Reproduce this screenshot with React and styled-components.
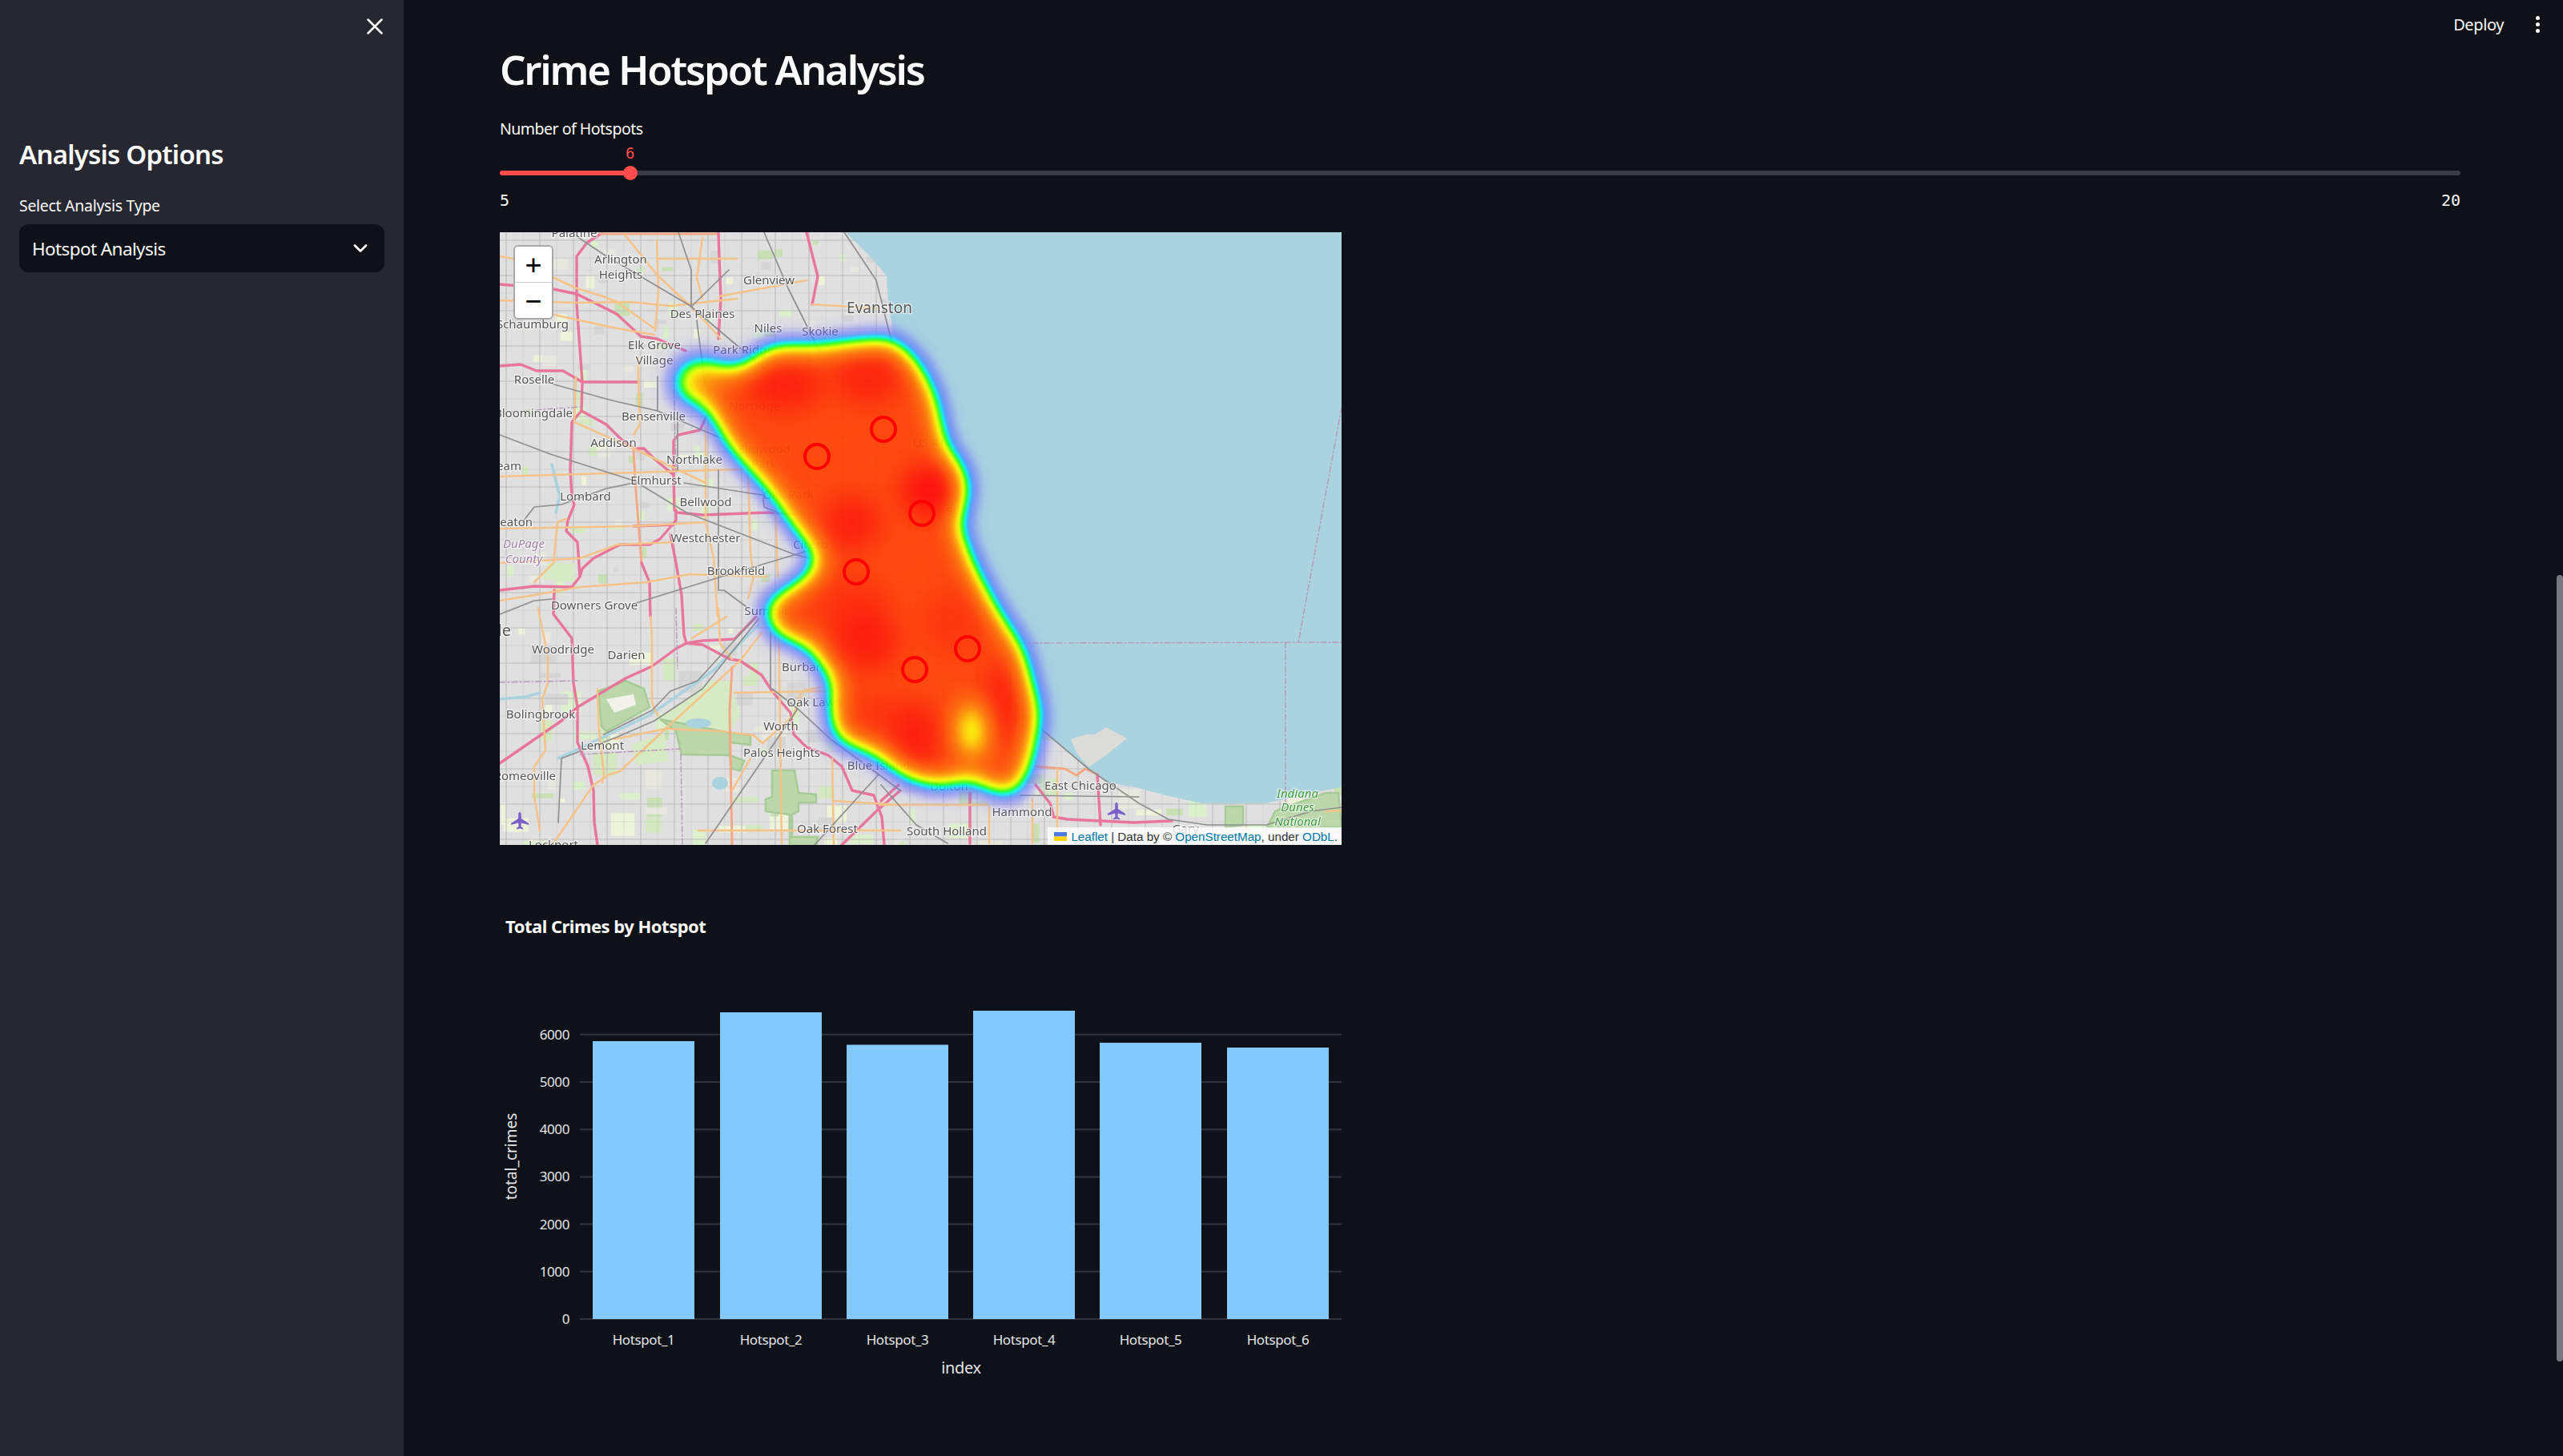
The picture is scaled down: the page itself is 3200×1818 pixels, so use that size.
import React from 'react';
import styled, { createGlobalStyle } from 'styled-components';
import { X, ChevronDown } from 'lucide-react';

const UI_FONT = '"Noto Sans", "Open Sans", sans-serif';
const MONO_FONT = '"DejaVu Sans Mono", "Liberation Mono", monospace';

const GlobalStyle = createGlobalStyle`
    html, body {
        margin: 0;
        padding: 0;
        background: #0e1117;
    }
    #root {
        width: 100%;
    }
`;

const Page = styled.div`
    display: flex;
    height: 1818px;
    overflow: hidden;
    color: #fafafa;
    font-family: ${UI_FONT};
`;

const Sidebar = styled.aside`
    display: flex;
    flex-direction: column;
    flex: 0 0 504px;
    box-sizing: border-box;
    padding: 16px 24px 0;
    background: #262730;
`;

const CloseRow = styled.div`
    display: flex;
    justify-content: flex-end;
    height: 34px;
    margin-right: -5px;
`;

const SidebarTitle = styled.h2`
    margin: 120px 0 0;
    font-size: 33px;
    line-height: 46px;
    font-weight: 600;
    letter-spacing: -0.8px;
`;

const FieldLabel = styled.label`
    display: block;
    font-size: 19.5px;
    line-height: 28px;
    letter-spacing: -0.5px;
    color: #fafafa;
`;

const SidebarLabel = styled(FieldLabel)`
    margin-top: 27px;
    letter-spacing: -0.3px;
`;

const SelectBox = styled.div`
    display: flex;
    align-items: center;
    justify-content: space-between;
    box-sizing: border-box;
    height: 60px;
    margin-top: 9px;
    padding: 0 16px 0 16px;
    border-radius: 12px;
    background: #0e1117;
    font-size: 22.5px;
    letter-spacing: -0.6px;
`;

const Main = styled.main`
    position: relative;
    flex: 1;
    min-width: 0;
    background: #0e1117;
`;

const TopBar = styled.header`
    display: flex;
    justify-content: flex-end;
    align-items: center;
    gap: 40px;
    height: 60px;
    padding-right: 29px;
    font-size: 20px;
    letter-spacing: -0.4px;
`;

const MenuDots = styled.span`
    display: flex;
    flex-direction: column;
    gap: 3px;
    i {
        display: block;
        width: 5px;
        height: 5px;
        border-radius: 50%;
        background: #fafafa;
    }
`;

const Content = styled.div`
    padding: 0 128px 0 120px;
`;

const Title = styled.h1`
    margin: -2px 0 0;
    font-size: 51px;
    line-height: 56px;
    font-weight: 600;
    letter-spacing: -2.2px;
`;

const SliderLabel = styled(FieldLabel)`
    margin-top: 33px;
`;

const SliderValue = styled.div`
    height: 26px;
    margin-top: 3px;
    padding-left: 157px;
    font-family: ${MONO_FONT};
    font-size: 19px;
    line-height: 26px;
    color: #ff4b4b;
`;

const SliderTrack = styled.div`
    position: relative;
    height: 6px;
    margin-top: 9px;
    border-radius: 3px;
    background: #3a3d45;
`;

const SliderFill = styled.div`
    height: 100%;
    border-radius: 3px;
    background: #ff4b4b;
`;

const SliderThumb = styled.span`
    position: absolute;
    top: -6px;
    width: 18px;
    height: 18px;
    margin-left: -9px;
    border-radius: 50%;
    background: #ff4b4b;
`;

const SliderRange = styled.div`
    display: flex;
    justify-content: space-between;
    margin-top: 18px;
    font-family: ${MONO_FONT};
    font-size: 20px;
    line-height: 26px;
    color: #fafafa;
`;

const MapFrame = styled.div`
    position: relative;
    width: 1051px;
    height: 765px;
    margin-top: 27px;
    overflow: hidden;
    background: #e0e0e0;
    svg {
        display: block;
    }
`;

const ZoomControl = styled.div`
    position: absolute;
    top: 16px;
    left: 17px;
    display: flex;
    flex-direction: column;
    width: 46px;
    border: 2px solid #a8a8a8;
    border-radius: 6px;
    overflow: hidden;
`;

const ZoomButton = styled.span`
    display: flex;
    align-items: center;
    justify-content: center;
    height: 44px;
    background: #fff;
    color: #000;
    font-family: "DejaVu Sans Mono", monospace;
    font-size: 34px;
    line-height: 1;
    & + & {
        border-top: 1px solid #ccc;
    }
`;

const Attribution = styled.div`
    position: absolute;
    right: 0;
    bottom: 0;
    display: flex;
    align-items: center;
    height: 22px;
    padding: 0 5px 0 8px;
    background: rgba(255, 255, 255, 0.8);
    color: #333;
    font-family: "Liberation Sans", sans-serif;
    font-size: 15.2px;
    white-space: pre;
    a {
        color: #0078a8;
        text-decoration: none;
    }
`;

const Flag = styled.svg`
    margin-right: 5px;
`;

const ChartTitle = styled.div`
    margin-top: 87px;
    padding-left: 7px;
    font-size: 22px;
    line-height: 28px;
    font-weight: 700;
    letter-spacing: -0.5px;
`;

const Chart = styled.svg`
    display: block;
    margin-top: 21px;
`;

const Scrollbar = styled.div`
    position: absolute;
    top: 718px;
    right: 0;
    width: 8px;
    height: 982px;
    border-radius: 4px;
    background: #77787d;
`;

// map drawing
const ROAD_COLORS = {
    motorway: '#e9769a',
    primary: '#f5c388',
    salmon: '#f4a885',
    rail: '#8f8f8f',
    canal: '#aad3df',
    border: '#b49ab8',
};
const ROAD_WIDTHS = { motorway: 3.4, primary: 2.5, salmon: 3, rail: 1.7, canal: 3.5, border: 1.4 };

const Road = styled.polyline`
    fill: none;
    stroke: ${props => ROAD_COLORS[props.$kind]};
    stroke-width: ${props => ROAD_WIDTHS[props.$kind]};
    stroke-linejoin: round;
    stroke-linecap: round;
    stroke-dasharray: ${props => (props.$kind === 'border' ? '7 3 2 3' : 'none')};
`;

const Park = styled.polygon`
    fill: ${props => (props.$light ? '#d6ebc4' : '#bcd8aa')};
    stroke: ${props => (props.$light ? 'none' : '#a6cb96')};
    stroke-width: 2.5;
`;

const Place = styled.text`
    font-family: ${UI_FONT};
    font-size: ${props => props.$size || 15}px;
    font-style: ${props => (props.$tone ? 'italic' : 'normal')};
    fill: ${props => props.$tone || '#565656'};
    stroke: rgba(255, 255, 255, 0.65);
    stroke-width: 2.5px;
    paint-order: stroke;
    text-anchor: ${props => props.$anchor || 'middle'};
`;

const ROADS = [
    ['motorway', '103,187 102,223 90,237 88,297 90,330 93,340 85,360 83,373 97,387 100,430 90,443 43,442 0,447'],
    ['motorway', '103,187 96,90 96,30 109,13 126,2'],
    ['salmon', '126,2 272,2'],
    ['motorway', '273,0 274,33 276,83 273,133'],
    ['motorway', '383,0 397,55 390,90'],
    ['motorway', '0,65 62,70 96,77 146,102 176,130 196,133 232,148'],
    ['motorway', '0,167 26,165 46,173 79,173 103,187 173,187'],
    ['motorway', '102,223 133,240 150,257 167,270 180,270 193,283 217,303 218,347 222,350 253,353 333,350 370,352'],
    ['motorway', '217,303 217,260 223,253 250,247 258,230'],
    ['motorway', '220,347 220,360 200,383 187,390 150,390 117,407 103,420 100,430'],
    ['motorway', '167,367 217,365'],
    ['salmon', '167,273 170,323 177,413'],
    ['motorway', '177,413 187,437 188,480'],
    ['motorway', '213,377 220,413 227,453 230,503 233,513'],
    ['motorway', '68,447 67,477 90,507 92,563 97,593'],
    ['motorway', '97,593 157,557 190,542 220,520 233,513 253,515 287,533 300,535 327,553 340,573 363,600 367,627 383,643 410,653 427,667 440,697 467,703 477,730 480,765'],
    ['motorway', '0,663 77,610 97,593'],
    ['motorway', '97,593 97,637 110,667 117,697 118,737 122,765'],
    ['motorway', '233,513 253,510 293,508 320,480'],
    ['motorway', '427,765 470,723 500,697'],
    ['salmon', '669,667 706,670 720,678 731,670 746,677'],
    ['motorway', '746,677 750,740'],
    ['motorway', '691,730 709,733 791,737 839,735'],
    ['motorway', '669,690 687,713 691,727'],
    ['motorway', '587,700 587,763'],
    ['motorway', '476,710 498,690'],
    ['primary', '0,305 167,300 333,295'],
    ['primary', '0,370 167,367 257,362'],
    ['primary', '0,413 100,407 147,390 217,387'],
    ['primary', '43,437 67,413 72,362 83,358'],
    ['primary', '93,237 167,270 257,313'],
    ['primary', '95,180 93,237'],
    ['primary', '257,243 257,362 267,407 272,480'],
    ['primary', '0,460 43,453 100,443 183,437 237,427 333,430'],
    ['primary', '173,180 175,240 167,253'],
    ['primary', '310,297 313,400 317,430 310,457'],
    ['primary', '343,297 347,430'],
    ['primary', '48,470 60,530 60,563 53,583 57,647 43,667 43,703 50,747'],
    ['primary', '188,480 190,503 190,587 197,603'],
    ['primary', '122,570 123,613 130,677 128,687'],
    ['primary', '67,763 117,690 137,677 150,673 207,620 300,535 327,500'],
    ['primary', '207,620 277,623 317,628 328,638 367,603 377,573 400,568'],
    ['primary', '207,620 143,633'],
    ['salmon', '290,543 287,597 290,765'],
    ['primary', '293,575 410,573'],
    ['primary', '348,470 352,765'],
    ['primary', '248,747 500,747'],
    ['primary', '417,710 500,715'],
    ['primary', '415,657 417,765'],
    ['primary', '290,697 313,657'],
    ['primary', '240,507 283,480'],
    ['primary', '273,470 275,513 290,533'],
    ['primary', '0,30 16,33 96,70 129,80 146,87 193,120'],
    ['primary', '0,85 96,88 163,87 213,92 296,83'],
    ['primary', '63,102 146,120 193,128'],
    ['primary', '156,3 196,53 239,93 276,133'],
    ['primary', '196,33 296,33'],
    ['primary', '196,10 198,73 194,123'],
    ['primary', '253,7 246,57 253,83'],
    ['primary', '173,157 173,190'],
    ['primary', '274,80 383,60'],
    ['primary', '390,90 470,95'],
    ['primary', '476,715 609,715'],
    ['primary', '696,670 696,763'],
    ['primary', '611,717 611,763'],
    ['primary', '665,707 665,763'],
    ['primary', '1031,723 1051,722'],
    ['rail', '0,253 63,277 167,310 233,350 367,402 387,407'],
    ['rail', '57,187 140,210 197,223 283,260'],
    ['rail', '197,180 197,223'],
    ['rail', '246,110 256,190'],
    ['rail', '93,3 133,30 240,93'],
    ['rail', '223,0 239,47 239,93 286,47'],
    ['rail', '239,93 330,170'],
    ['rail', '30,360 43,343 77,340 133,320 167,313'],
    ['rail', '230,313 327,328'],
    ['rail', '222,237 222,297'],
    ['rail', '273,297 273,447 280,447 307,467'],
    ['rail', '283,270 327,313 330,343 347,350'],
    ['rail', '0,477 43,460 65,458'],
    ['rail', '170,463 277,430 387,397'],
    ['rail', '317,483 247,560 213,573 190,597 130,627'],
    ['rail', '323,483 253,570 193,610 147,630 77,657 73,737'],
    ['rail', '372,595 257,763'],
    ['rail', '340,570 372,595 413,633 473,677 500,697'],
    ['rail', '338,500 338,570'],
    ['rail', '473,677 393,765'],
    ['rail', '672,617 735,670 798,713 835,733 883,740 957,740 1013,723 1051,718'],
    ['rail', '650,703 798,705'],
    ['rail', '476,690 520,740 559,763'],
    ['rail', '430,0 470,60 490,140'],
    ['rail', '330,0 360,70 400,150'],
    ['border', '0,562 97,560'],
    ['border', '220,470 222,545'],
    ['border', '100,652 225,645'],
    ['border', '226,652 228,765'],
    ['border', '217,180 220,300'],
    ['border', '0,225 100,218'],
];

const LAKE_LINES = [
    ['border', '1051,219 997,512'],
    ['border', '650,513 1051,512'],
    ['border', '981,512 981,711'],
];

const PARKS = [
    ['200,607 263,560 287,560 300,603 287,623', true],
    ['60,413 93,413 93,437 53,433', true],
    ['165,640 205,625 210,660 170,665', true],
    ['123,573 157,560 180,570 187,593 133,623 127,617', false],
    ['200,608 287,625 313,628 313,640 287,637 287,653 305,660 300,672 290,670 287,653 227,652 220,623', false],
    ['340,672 368,672 373,700 395,702 395,712 373,712 373,723 365,727 365,755 397,755 395,766 362,766 362,727 332,723 332,708 340,705', false],
    ['906,717 928,717 928,740 906,743', false],
    ['968,723 1031,700 1047,700 1051,743 958,743', false],
];

const LAKE = '432,0 467,35 483,55 485,90 492,129 537,189 572,288 572,363 607,463 665,600 672,617 735,670 757,687 794,693 831,703 876,713 957,713 1013,700 1051,693 1051,0';
const HARBOR = '713,633 732,627 743,627 757,618 783,632 757,653 735,668 720,650';

const PLACES = [
    ['Palatine', 93, 6], ['Arlington', 151, 39], ['Heights', 151, 58], ['Glenview', 336, 65],
    ['Des Plaines', 253, 107], ['Evanston', 474, 101, 19], ['Niles', 335, 125], ['Skokie', 400, 129],
    ['Schaumburg', 41, 120], ['Elk Grove', 193, 146], ['Village', 193, 165], ['Park Ridge', 304, 152],
    ['Roselle', 43, 189], ['Bensenville', 192, 235], ['Bloomingdale', 42, 231], ['Addison', 142, 268],
    ['Northlake', 243, 289], ['Elmhurst', 195, 315], ['Lombard', 107, 335], ['Bellwood', 257, 342],
    ['Westchester', 257, 387], ['Brookfield', 295, 428], ['Downers Grove', 118, 471], ['Summit', 333, 478],
    ['Woodridge', 79, 526], ['Darien', 158, 533], ['Bolingbrook', 51, 607], ['Burbank', 382, 548],
    ['Oak Lawn', 393, 592], ['Worth', 351, 622], ['Lemont', 128, 646], ['Palos Heights', 352, 655],
    ['Blue Island', 473, 671], ['Oak Forest', 409, 750], ['South Holland', 558, 753], ['Hammond', 652, 729],
    ['East Chicago', 725, 696], ['Dolton', 561, 697], ['Gary', 856, 750], ['Lockport', 67, 770],
    ['Elmwood', 330, 276], ['Park', 330, 294], ['Oak Park', 360, 333], ['Cicero', 388, 395],
    ['Norridge', 318, 222], ['US 41', 536, 268], ['90', 566, 353],
];

const CUT_PLACES = [
    ['Stream', 27, 297, 15], ['Wheaton', 41, 367, 15], ['Naperville', 14, 504, 20], ['Romeoville', 70, 684, 15],
];

const TINTED_PLACES = [
    ['DuPage', 30, 394, '#a381a8'], ['County', 30, 413, '#a381a8'],
    ['Indiana', 996, 706, '#3f9d3f'], ['Dunes', 996, 723, '#3f9d3f'], ['National', 996, 741, '#3f9d3f'],
];

const HEAT_EDGE = '222,189 232,166 262,164 287,180 312,170 341,148 397,148 439,143 488,139 516,164 537,204 551,269 574,298 578,328 566,363 584,413 612,468 647,522 668,602 657,662 640,697 608,688 587,674 555,686 516,678 467,644 425,629 418,587 425,562 390,512 348,497 337,468 397,428 404,403 376,368 341,318 292,264 264,213 229,204';

// x, y, rx, ry, strength
const HEAT_PEAKS = [
    [355, 192, 48, 30, 0.7], [460, 182, 42, 32, 0.65], [537, 323, 36, 32, 1], [439, 363, 36, 34, 0.7],
    [440, 463, 48, 34, 0.4], [457, 510, 42, 38, 0.7], [520, 630, 30, 42, 0.75], [627, 587, 22, 52, 0.7],
    [474, 600, 32, 26, 0.35], [565, 487, 42, 42, 0.3],
];

const HOTSPOTS = [[479, 246], [396, 280], [527, 351], [445, 424], [584, 520], [518, 546]];

const HEAT_RAMP = [
    [0.45, 0.45, 1, 0], [0.45, 0.45, 1, 0.08], [0.42, 0.42, 1, 0.25], [0.4, 0.42, 1, 0.42],
    [0.38, 0.44, 1, 0.55], [0.3, 0.5, 1, 0.66], [0.18, 0.62, 1, 0.76], [0, 0.9, 1, 0.84],
    [0, 1, 0.6, 0.9], [0.2, 1, 0.1, 0.92], [0.6, 1, 0, 0.93], [0.9, 1, 0, 0.93],
    [1, 0.88, 0, 0.93], [1, 0.72, 0, 0.93], [1, 0.58, 0, 0.93], [1, 0.47, 0, 0.93],
    [1, 0.38, 0, 0.93], [1, 0.31, 0, 0.93], [1, 0.2, 0, 0.93], [1, 0.1, 0, 0.93], [1, 0, 0, 0.93],
];
const rampChannel = i => HEAT_RAMP.map(step => step[i]).join(' ');

const buildBlocks = () => {
    const tints = ['#d4e9c0', '#dcf0cc', '#eef4da', '#e8e8e0', '#c9e0b4', '#d6d6d6'];
    const blocks = [];
    let seed = 4711;
    const next = () => {
        seed = (seed * 16807) % 2147483647;
        return seed / 2147483647;
    };
    for (let i = 0; i < 420; i++) {
        const x = next() * 1051;
        const y = next() * 765;
        const south = y > 500;
        blocks.push({
            x,
            y,
            w: 5 + next() * (south ? 28 : 14),
            h: 5 + next() * (south ? 24 : 12),
            fill: tints[Math.floor(next() * tints.length)],
        });
    }
    return blocks;
};

const buildGrid = () => {
    const lines = [];
    for (let x = 8; x < 1051; x += 21) {
        lines.push({ x1: x, y1: 0, x2: x, y2: 765, width: (x - 8) % 42 === 0 ? 1.1 : 0.4 });
    }
    for (let y = 10; y < 765; y += 22) {
        lines.push({ x1: 0, y1: y, x2: 1051, y2: y, width: (y - 10) % 44 === 0 ? 1.1 : 0.4 });
    }
    return lines;
};

const BLOCKS = buildBlocks();
const GRID = buildGrid();

const Plane = ({ x, y }) => (
    <path
        transform={`translate(${x} ${y})`}
        fill="#7a5fc9"
        d="M0 -11C1.2 -11 1.8 -9 1.8 -7L1.8 -3L11 3L11 5L1.8 2.5L1.5 7L4 9L4 10.5L0 9.5L-4 10.5L-4 9L-1.5 7L-1.8 2.5L-11 5L-11 3L-1.8 -3L-1.8 -7C-1.8 -9 -1.2 -11 0 -11Z"
    />
);

const CrimeMap = () => (
    <svg width="1051" height="765" viewBox="0 0 1051 765">
        <defs>
            <filter id="tile-soften" x="0" y="0" width="100%" height="100%">
                <feGaussianBlur stdDeviation="0.65" />
            </filter>
            <filter id="heat" filterUnits="userSpaceOnUse" x="0" y="0" width="1051" height="765" colorInterpolationFilters="sRGB">
                <feGaussianBlur in="SourceAlpha" stdDeviation="16" />
                <feColorMatrix type="matrix" values="0 0 0 1 0  0 0 0 1 0  0 0 0 1 0  0 0 0 1 0" />
                <feComponentTransfer>
                    <feFuncR type="table" tableValues={rampChannel(0)} />
                    <feFuncG type="table" tableValues={rampChannel(1)} />
                    <feFuncB type="table" tableValues={rampChannel(2)} />
                    <feFuncA type="table" tableValues={rampChannel(3)} />
                </feComponentTransfer>
            </filter>
            <mask id="heat-cool" maskUnits="userSpaceOnUse" x="0" y="0" width="1051" height="765">
                <rect width="1051" height="765" fill="#fff" />
                <ellipse cx="590" cy="622" rx="15" ry="34" fill="#6e6e6e" />
                <ellipse cx="245" cy="185" rx="30" ry="26" fill="#c8c8c8" />
            </mask>
        </defs>
        <g filter="url(#tile-soften)">
            <rect width="1051" height="765" fill="#e0e0e0" />
            {BLOCKS.map((b, i) => (
                <rect key={i} x={b.x} y={b.y} width={b.w} height={b.h} fill={b.fill} />
            ))}
            {GRID.map(({ width, ...line }, i) => (
                <line key={i} {...line} stroke="#bcbcbc" strokeWidth={width} />
            ))}
            {PARKS.map(([points, light], i) => (
                <Park key={i} points={points} $light={light} />
            ))}
            <polygon points="133,583 167,577 170,590 143,600" fill="#f2f2ea" />
            <polygon points={LAKE} fill="#aad3df" />
            <polygon points={HARBOR} fill="#dcdcd8" />
            <ellipse cx="248" cy="613" rx="16" ry="6" fill="#aad3df" />
            <ellipse cx="275" cy="688" rx="10" ry="8" fill="#aad3df" />
            <Road $kind="canal" points="73,657 187,603 267,547 323,490" />
            <Road $kind="canal" points="0,583 33,580 50,575" />
            <Road $kind="canal" points="65,290 75,330 70,350" />
            {LAKE_LINES.map(([kind, points], i) => (
                <Road key={i} $kind={kind} points={points} />
            ))}
            {ROADS.map(([kind, points], i) => (
                <Road key={i} $kind={kind} points={points} />
            ))}
            <Plane x={25} y={735} />
            <Plane x={770} y={723} />
            {PLACES.map(([name, x, y, size]) => (
                <Place key={name + x} x={x} y={y} $size={size}>{name}</Place>
            ))}
            {CUT_PLACES.map(([name, x, y, size]) => (
                <Place key={name} x={x} y={y} $size={size} $anchor="end">{name}</Place>
            ))}
            {TINTED_PLACES.map(([name, x, y, tone]) => (
                <Place key={name} x={x} y={y} $tone={tone}>{name}</Place>
            ))}
        </g>
        <g filter="url(#heat)">
            <g opacity="0.88" mask="url(#heat-cool)">
                <polygon points={HEAT_EDGE} fill="#000" stroke="#000" strokeWidth="14" strokeLinejoin="round" />
            </g>
            {HEAT_PEAKS.map(([cx, cy, rx, ry, strength], i) => (
                <ellipse key={i} cx={cx} cy={cy} rx={rx} ry={ry} fill="#000" fillOpacity={strength} />
            ))}
        </g>
        {HOTSPOTS.map(([cx, cy]) => (
            <circle key={cx} cx={cx} cy={cy} r="15" fill="none" stroke="#ff0000" strokeWidth="4" />
        ))}
    </svg>
);

// bar chart
const CHART_ZERO = 456;
const PER_THOUSAND = 59.2;
const BARS = [
    { name: 'Hotspot_1', x: 116, height: 347 },
    { name: 'Hotspot_2', x: 275, height: 383 },
    { name: 'Hotspot_3', x: 433, height: 342.5 },
    { name: 'Hotspot_4', x: 591, height: 385 },
    { name: 'Hotspot_5', x: 749, height: 345 },
    { name: 'Hotspot_6', x: 908, height: 339 },
];
const TICKS = [0, 1000, 2000, 3000, 4000, 5000, 6000];

const ChartText = styled.text`
    font-family: ${UI_FONT};
    font-size: ${props => props.$size || 17}px;
    letter-spacing: ${props => props.$spacing || '-0.4px'};
    fill: #e4e6ea;
    text-anchor: ${props => props.$anchor || 'middle'};
`;

const CrimeChart = () => (
    <Chart width="1051" height="540" viewBox="0 0 1051 540">
        {TICKS.map(tick => {
            const y = CHART_ZERO - (tick / 1000) * PER_THOUSAND;
            return (
                <g key={tick}>
                    <line x1="100" x2="1051" y1={y} y2={y} stroke="#31343b" strokeWidth="2" />
                    <ChartText x="87" y={y + 6} $anchor="end">{tick}</ChartText>
                </g>
            );
        })}
        {BARS.map(bar => (
            <g key={bar.name}>
                <rect x={bar.x} y={CHART_ZERO - bar.height} width="127" height={bar.height} fill="#83c9ff" />
                <ChartText x={bar.x + 63.5} y="488">{bar.name}</ChartText>
            </g>
        ))}
        <ChartText x="576" y="524" $size={20}>index</ChartText>
        <ChartText x="21" y="253" $size={19} $spacing="0" transform="rotate(-90 21 253)">total_crimes</ChartText>
    </Chart>
);

const App = () => (
    <Page>
        <GlobalStyle />
        <Sidebar>
            <CloseRow>
                <X size={34} strokeWidth={1.8} color="#fafafa" />
            </CloseRow>
            <SidebarTitle>Analysis Options</SidebarTitle>
            <SidebarLabel>Select Analysis Type</SidebarLabel>
            <SelectBox>
                Hotspot Analysis
                <ChevronDown size={28} strokeWidth={2.4} color="#fafafa" />
            </SelectBox>
        </Sidebar>
        <Main>
            <TopBar>
                <span>Deploy</span>
                <MenuDots><i /><i /><i /></MenuDots>
            </TopBar>
            <Content>
                <Title>Crime Hotspot Analysis</Title>
                <SliderLabel>Number of Hotspots</SliderLabel>
                <SliderValue>6</SliderValue>
                <SliderTrack>
                    <SliderFill style={{ width: `${((6 - 5) / 15) * 100}%` }} />
                    <SliderThumb style={{ left: `${((6 - 5) / 15) * 100}%` }} />
                </SliderTrack>
                <SliderRange>
                    <span>5</span>
                    <span>20</span>
                </SliderRange>
                <MapFrame>
                    <CrimeMap />
                    <ZoomControl>
                        <ZoomButton>+</ZoomButton>
                        <ZoomButton>−</ZoomButton>
                    </ZoomControl>
                    <Attribution>
                        <Flag width="16" height="11" viewBox="0 0 16 11">
                            <rect width="16" height="5.5" fill="#4c7be1" />
                            <rect y="5.5" width="16" height="5.5" fill="#ffd500" />
                        </Flag>
                        <a>Leaflet</a> | Data by © <a>OpenStreetMap</a>, under <a>ODbL</a>.
                    </Attribution>
                </MapFrame>
                <ChartTitle>Total Crimes by Hotspot</ChartTitle>
                <CrimeChart />
            </Content>
            <Scrollbar />
        </Main>
    </Page>
);

export default App;
